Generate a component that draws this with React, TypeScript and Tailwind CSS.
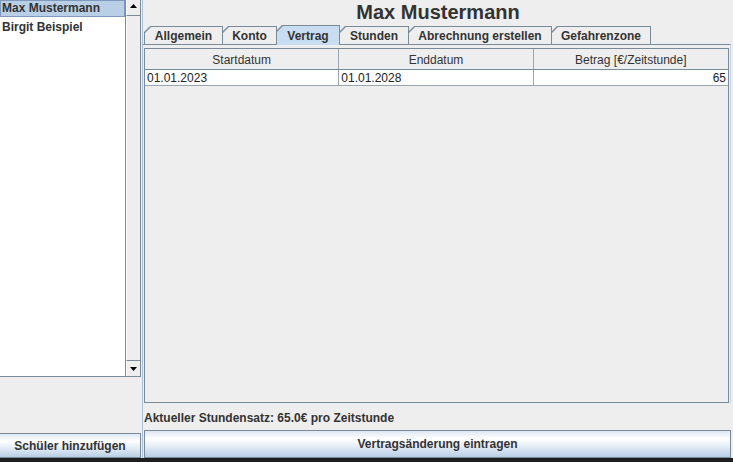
import clsx from "clsx";

const tabs = [
    {label: 'Allgemein', width: 'w-[79px]'},
    {label: 'Konto', width: 'w-[55px]'},
    {label: 'Vertrag', width: 'w-[64px]', selected: true},
    {label: 'Stunden', width: 'w-[70px]'},
    {label: 'Abrechnung erstellen', width: 'w-[144px]'},
    {label: 'Gefahrenzone', width: 'w-[100px]'},
]

const buttonBg = 'bg-[linear-gradient(to_bottom,#dde8f3_0%,#ffffff_30%,#eef3f9_50%,#b8cfe5_100%)]'

const Tab = ({label, width, selected, first}: { label: string, width: string, selected?: boolean, first: boolean }) => (
    <div className={clsx(
        'bg-[#7a8a99] px-px pt-px [clip-path:polygon(0_6px,6px_0,100%_0,100%_100%,0_100%)]',
        width,
        !first && '-ml-px',
        selected ? 'relative z-10 -mb-px h-[20px]' : 'h-[18px]'
    )}>
        <div className={clsx(
            'h-full text-center text-[12px] font-bold leading-[16px] text-[#333333] [clip-path:polygon(0_6px,6px_0,100%_0,100%_100%,0_100%)]',
            selected ? 'bg-[#c8ddf2] pt-[2px]' : 'bg-[#eeeeee] pt-px'
        )}>
            {label}
        </div>
    </div>
)

const Arrow = ({up}: { up?: boolean }) => (
    <svg width="7" height="4" viewBox="0 0 7 4">
        <polygon points={up ? '3.5,0 7,4 0,4' : '0,0 7,0 3.5,4'} fill="#000"/>
    </svg>
)

const StudentList = () => (
    <div className="flex w-[141px] flex-col">
        <div className="flex h-[377px] border-b border-[#7a8a99]">
            <div className="w-[126px] border-r border-[#7a8a99] bg-white text-[12px] font-bold text-[#333333]">
                <div className="h-[17px] border border-[#7f98bd] bg-[#b8cfe5] px-px leading-[15px]">Max Mustermann</div>
                <div className="h-[18px] px-[2px] pt-[3px] leading-[15px]">Birgit Beispiel</div>
            </div>
            <div className="flex w-[15px] flex-col border-r border-[#7a8a99] bg-[#eeeeee]">
                <div className="flex h-[16px] items-center justify-center border-b border-[#7a8a99] border-l border-l-white pb-[3px]">
                    <Arrow up/>
                </div>
                <div className="flex-1 border-l border-white"/>
                <div className="flex h-[16px] items-center justify-center border-t border-[#7a8a99] border-l border-l-white">
                    <Arrow/>
                </div>
            </div>
        </div>
        <div className="flex-1"/>
        <button className={clsx('h-[25px] border-y border-r border-[#7a8a99] text-[12px] font-bold leading-[16px] text-[#333333]', buttonBg)}>
            Schüler hinzufügen
        </button>
    </div>
)

const ContractTable = () => (
    <div className="ml-px mr-px flex h-[355px] flex-col border border-[#7a8a99] bg-[#eeeeee]">
        <div className="grid h-[21px] grid-cols-3 border-b border-[#7a8a99] text-center text-[12px] leading-[18px] text-[#333333]">
            <div className="border-r border-[#9aa6b2] pt-[2px]">Startdatum</div>
            <div className="border-r border-[#9aa6b2] pt-[2px]">Enddatum</div>
            <div className="pt-[2px]">Betrag [€/Zeitstunde]</div>
        </div>
        <div className="grid h-[16px] grid-cols-3 border-b border-[#9aa6b2] bg-white text-[12px] leading-[14px] text-[#222222]">
            <div className="border-r border-[#9aa6b2] px-[2px] pt-px">01.01.2023</div>
            <div className="border-r border-[#9aa6b2] px-[2px] pt-px">01.01.2028</div>
            <div className="px-[2px] pt-px text-right">65</div>
        </div>
    </div>
)

const App = () => {
    return (
        <div className="h-[462px] w-[733px] overflow-hidden bg-[#eeeeee] font-['Liberation_Sans',Arial,sans-serif] text-[#333333]">
            <div className="flex h-[458px]">
                <StudentList/>
                <div className="w-[2px] border-r border-[#a9bfd6]"/>
                <div className="flex w-[590px] flex-col">
                    <div className="h-[24px] text-center text-[20px] font-bold leading-[24px]">Max Mustermann</div>
                    <div className="flex h-[20px] items-end pl-px">
                        {tabs.map((t, i) =>
                            <Tab key={t.label} label={t.label} width={t.width} selected={t.selected} first={i === 0}/>)}
                    </div>
                    <div className="mr-[2px] border-t border-r border-t-[#7a8a99] border-r-[#c8d8e8] pt-[3px] pb-px">
                        <ContractTable/>
                    </div>
                    <div className="mt-[6px] pl-px text-[12px] font-bold leading-[16px]">
                        Aktueller Stundensatz: 65.0€ pro Zeitstunde
                    </div>
                    <button className={clsx('ml-px mr-[2px] mt-[4px] h-[28px] border border-[#7a8a99] text-[12px] font-bold leading-[16px] text-[#333333]', buttonBg)}>
                        Vertragsänderung eintragen
                    </button>
                </div>
            </div>
            <div className="h-[4px] bg-[#1e1e1e]"/>
        </div>
    );
};

export default App;
